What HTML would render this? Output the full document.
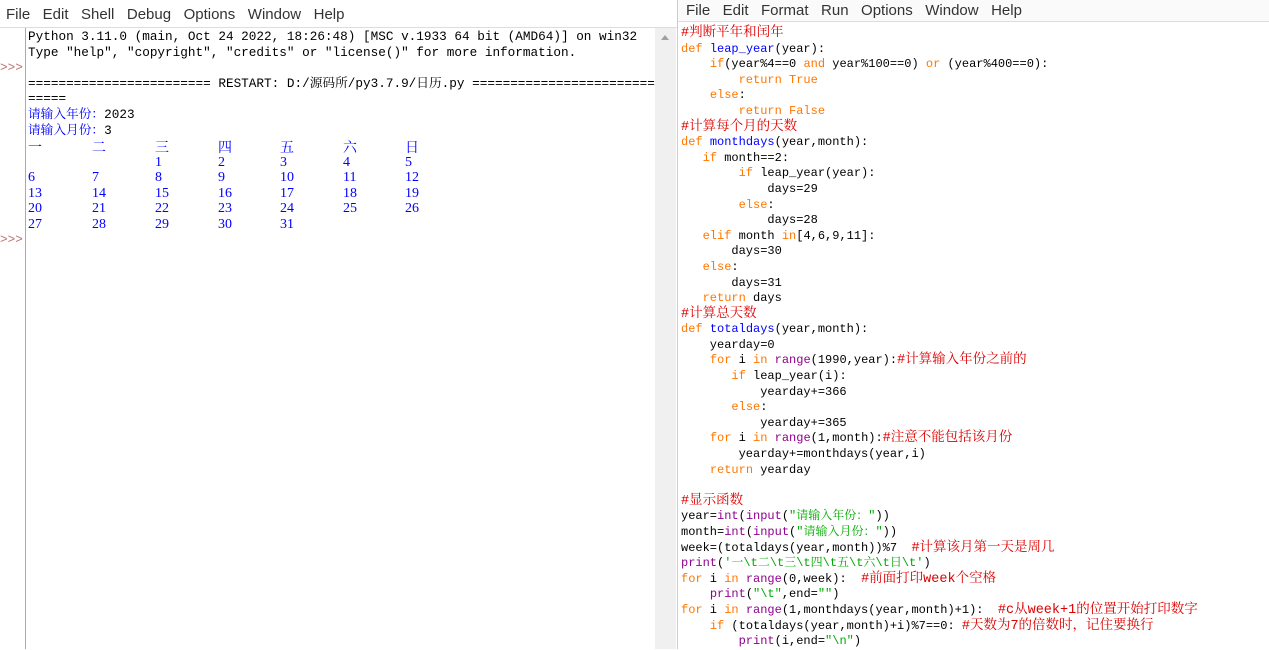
<!DOCTYPE html>
<html><head><meta charset="utf-8"><style>
*{margin:0;padding:0;box-sizing:border-box}
body{width:1269px;height:649px;overflow:hidden;background:#fff;position:relative;font-family:"Liberation Mono","Noto Sans CJK SC",monospace}
.menu{position:absolute;font-family:"Liberation Sans","Noto Sans CJK SC",sans-serif;font-size:15px;color:#333;white-space:pre}
pre{position:absolute;font-family:"Liberation Mono","Noto Serif CJK SC",monospace;white-space:pre;line-height:15.6px}
.k{color:#ff7700}.d{color:#0000ff}.c{color:#dd0000}.s{color:#00aa00}.b{color:#900090}.o{color:#0000ff}
.c{font-size:13.5px}
.cal{position:absolute;color:#0000ff;font-family:"Liberation Serif","Noto Serif CJK SC",serif;font-size:14px}
</style></head><body>
<div style="position:absolute;left:0;top:0;width:677px;height:28px;background:#fff;border-bottom:1px solid #ddd"></div>
<div class="menu" style="left:6px;top:6px">File   Edit   Shell   Debug   Options   Window   Help</div>
<div style="position:absolute;left:25px;top:28px;width:1px;height:621px;background:#aaa"></div>
<div style="position:absolute;left:655px;top:28px;width:21px;height:621px;background:#f0f0f0"></div>
<div style="position:absolute;left:661px;top:35px;width:0;height:0;border-left:4px solid transparent;border-right:4px solid transparent;border-bottom:5px solid #a0a0a0"></div>
<div style="position:absolute;left:677px;top:0;width:1px;height:649px;background:#ccc"></div>
<pre style="left:0;top:60px;color:#c07070;font-size:12.7px">&gt;&gt;&gt;</pre>
<pre style="left:0;top:232px;color:#c07070;font-size:12.7px">&gt;&gt;&gt;</pre>
<pre style="left:28px;top:29px;font-size:12.7px;color:#000">Python 3.11.0 (main, Oct 24 2022, 18:26:48) [MSC v.1933 64 bit (AMD64)] on win32
Type "help", "copyright", "credits" or "license()" for more information.

======================== RESTART: D:/源码所/py3.7.9/日历.py ========================
=====
<span class="o">请输入年份：</span>2023
<span class="o">请输入月份：</span>3</pre>
<div class="cal" style="left:28px;top:137px">一</div><div class="cal" style="left:92px;top:137px">二</div><div class="cal" style="left:155px;top:137px">三</div><div class="cal" style="left:218px;top:137px">四</div><div class="cal" style="left:280px;top:137px">五</div><div class="cal" style="left:343px;top:137px">六</div><div class="cal" style="left:405px;top:137px">日</div>
<div class="cal" style="left:155px;top:155px">1</div><div class="cal" style="left:218px;top:155px">2</div><div class="cal" style="left:280px;top:155px">3</div><div class="cal" style="left:343px;top:155px">4</div><div class="cal" style="left:405px;top:155px">5</div>
<div class="cal" style="left:28px;top:170px">6</div><div class="cal" style="left:92px;top:170px">7</div><div class="cal" style="left:155px;top:170px">8</div><div class="cal" style="left:218px;top:170px">9</div><div class="cal" style="left:280px;top:170px">10</div><div class="cal" style="left:343px;top:170px">11</div><div class="cal" style="left:405px;top:170px">12</div>
<div class="cal" style="left:28px;top:186px">13</div><div class="cal" style="left:92px;top:186px">14</div><div class="cal" style="left:155px;top:186px">15</div><div class="cal" style="left:218px;top:186px">16</div><div class="cal" style="left:280px;top:186px">17</div><div class="cal" style="left:343px;top:186px">18</div><div class="cal" style="left:405px;top:186px">19</div>
<div class="cal" style="left:28px;top:201px">20</div><div class="cal" style="left:92px;top:201px">21</div><div class="cal" style="left:155px;top:201px">22</div><div class="cal" style="left:218px;top:201px">23</div><div class="cal" style="left:280px;top:201px">24</div><div class="cal" style="left:343px;top:201px">25</div><div class="cal" style="left:405px;top:201px">26</div>
<div class="cal" style="left:28px;top:217px">27</div><div class="cal" style="left:92px;top:217px">28</div><div class="cal" style="left:155px;top:217px">29</div><div class="cal" style="left:218px;top:217px">30</div><div class="cal" style="left:280px;top:217px">31</div>
<div style="position:absolute;left:678px;top:0;width:591px;height:22px;background:#fafafa;border-bottom:1px solid #ddd"></div>
<div class="menu" style="left:686px;top:2px">File   Edit   Format   Run   Options   Window   Help</div>
<pre style="left:681px;top:26px;font-size:12px;color:#000"><span class="c">#判断平年和闰年</span>
<span class="k">def</span> <span class="d">leap_year</span>(year):
    <span class="k">if</span>(year%4==0 <span class="k">and</span> year%100==0) <span class="k">or</span> (year%400==0):
        <span class="k">return</span> <span class="k">True</span>
    <span class="k">else</span>:
        <span class="k">return</span> <span class="k">False</span>
<span class="c">#计算每个月的天数</span>
<span class="k">def</span> <span class="d">monthdays</span>(year,month):
   <span class="k">if</span> month==2:
        <span class="k">if</span> leap_year(year):
            days=29
        <span class="k">else</span>:
            days=28
   <span class="k">elif</span> month <span class="k">in</span>[4,6,9,11]:
       days=30
   <span class="k">else</span>:
       days=31
   <span class="k">return</span> days
<span class="c">#计算总天数</span>
<span class="k">def</span> <span class="d">totaldays</span>(year,month):
    yearday=0
    <span class="k">for</span> i <span class="k">in</span> <span class="b">range</span>(1990,year):<span class="c">#计算输入年份之前的</span>
       <span class="k">if</span> leap_year(i):
           yearday+=366
       <span class="k">else</span>:
           yearday+=365
    <span class="k">for</span> i <span class="k">in</span> <span class="b">range</span>(1,month):<span class="c">#注意不能包括该月份</span>
        yearday+=monthdays(year,i)
    <span class="k">return</span> yearday

<span class="c">#显示函数</span>
year=<span class="b">int</span>(<span class="b">input</span>(<span class="s">"请输入年份："</span>))
month=<span class="b">int</span>(<span class="b">input</span>(<span class="s">"请输入月份："</span>))
week=(totaldays(year,month))%7  <span class="c">#计算该月第一天是周几</span>
<span class="b">print</span>(<span class="s">'一\t二\t三\t四\t五\t六\t日\t'</span>)
<span class="k">for</span> i <span class="k">in</span> <span class="b">range</span>(0,week):  <span class="c">#前面打印week个空格</span>
    <span class="b">print</span>(<span class="s">"\t"</span>,end=<span class="s">""</span>)
<span class="k">for</span> i <span class="k">in</span> <span class="b">range</span>(1,monthdays(year,month)+1):  <span class="c">#c从week+1的位置开始打印数字</span>
    <span class="k">if</span> (totaldays(year,month)+i)%7==0: <span class="c">#天数为7的倍数时，记住要换行</span>
        <span class="b">print</span>(i,end=<span class="s">"\n"</span>)</pre>
</body></html>
